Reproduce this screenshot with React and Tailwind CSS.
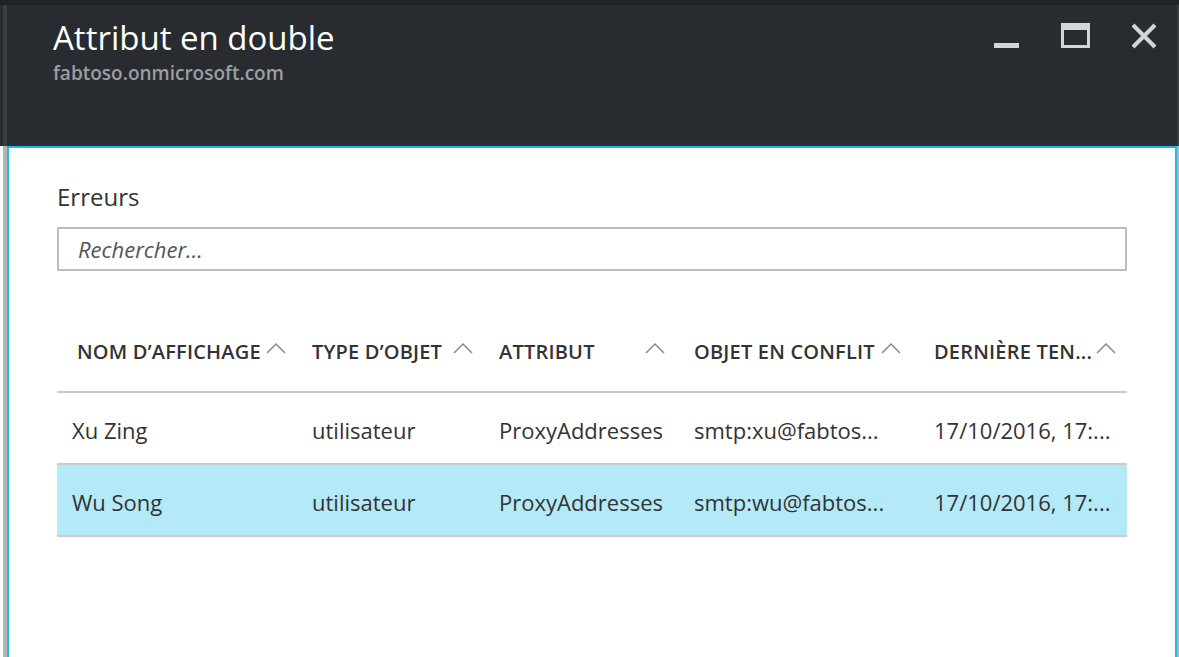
import React from 'react';

const font = { fontFamily: '"Open Sans", "Noto Sans", sans-serif' };

function Caret() {
  return (
    <svg width="20" height="12" viewBox="0 0 20 12" className="shrink-0">
      <polyline points="1,11 10,2 19,11" fill="none" stroke="#8a8a8a" strokeWidth="1.5" />
    </svg>
  );
}

const columns = [
  { label: 'NOM D\u2019AFFICHAGE', head: 'pl-[20px] pr-[11px]', caretAuto: true },
  { label: 'TYPE D\u2019OBJET', head: 'pl-[15px] pr-[11px]', caretAuto: true },
  { label: 'ATTRIBUT', head: 'pl-[15px] pr-[14px]', caretAuto: true },
  { label: 'OBJET EN CONFLIT', head: 'pl-[15px] pr-[11px]', caretAuto: false },
  { label: 'DERNIÈRE TEN...', head: 'pl-[15px] pr-[11px]', caretAuto: true },
];

const rows = [
  { name: 'Xu Zing', type: 'utilisateur', attr: 'ProxyAddresses', obj: 'smtp:xu@fabtos...', date: '17/10/2016, 17:...', selected: false },
  { name: 'Wu Song', type: 'utilisateur', attr: 'ProxyAddresses', obj: 'smtp:wu@fabtos...', date: '17/10/2016, 17:...', selected: true },
];

const grid = 'grid grid-cols-[240px_187px_195px_240px_1fr]';

export default function App() {
  return (
    <div className="w-full h-[657px] bg-white overflow-hidden flex flex-col" style={font}>
      <div className="h-[5px] bg-[#1f2226] shrink-0" />

      <div className="h-[141px] shrink-0 flex bg-[#282c31]">
        <div className="w-[3px]" />
        <div className="w-[4px] bg-[#3a3e43]" />
        <div className="flex-1 flex justify-between pl-[46px]">
          <div className="pt-[11px]">
            <h1 className="text-[33px] leading-[44px] text-white font-normal">Attribut en double</h1>
            <p className="text-[19px] leading-[24px] text-[#9b9ea2] font-semibold mt-[1px]">fabtoso.onmicrosoft.com</p>
          </div>
          <div className="flex items-start pt-[18px] pr-[20px]">
            <div className="w-[25px] h-[5px] bg-[#d4d5d6] mt-[20px]" />
            <div className="w-[29px] h-[25px] ml-[42px] border-[3px] border-t-[7px] border-[#d4d5d6]" />
            <svg width="26" height="26" viewBox="0 0 26 26" className="ml-[41px]">
              <path d="M2 2 L24 24 M24 2 L2 24" stroke="#d4d5d6" strokeWidth="4" />
            </svg>
          </div>
        </div>
        <div className="w-[2px] bg-[#3a3e43]" />
      </div>

      <div className="flex-1 flex">
        <div className="w-[3px]" />
        <div className="w-[4px] bg-[#b4b4b4]" />
        <div className="flex-1 border-2 border-b-0 border-[#1cb9ee] px-[48px] pt-[33px]">
          <h2 className="text-[24px] leading-[32px] text-[#333] mb-[14px]">Erreurs</h2>
          <div className="h-[44px] border-2 border-[#bdbdbd] flex items-center pl-[19px]">
            <span className="italic text-[22px] text-[#555]">Rechercher...</span>
          </div>

          <div className="mt-[41px]">
            <div className={`${grid} h-[81px] border-b-2 border-[#cccccc]`}>
              {columns.map((c) => (
                <div key={c.label} className={`flex items-center ${c.head}`}>
                  <span className="text-[20px] font-semibold tracking-[0.2px] text-[#333] whitespace-nowrap">{c.label}</span>
                  <span className={c.caretAuto ? 'ml-auto -mt-[8px]' : 'ml-[6px] -mt-[8px]'}>
                    <Caret />
                  </span>
                </div>
              ))}
            </div>
            {rows.map((r) => (
              <div
                key={r.name}
                className={`${grid} h-[72px] border-b-2 border-[#cccccc] text-[22px] text-[#333] ${r.selected ? 'bg-[#b4e9f8]' : ''}`}
              >
                <div className="flex items-center pt-[4px] pl-[15px] whitespace-nowrap">{r.name}</div>
                <div className="flex items-center pt-[4px] pl-[15px] whitespace-nowrap">{r.type}</div>
                <div className="flex items-center pt-[4px] pl-[15px] whitespace-nowrap">{r.attr}</div>
                <div className="flex items-center pt-[4px] pl-[15px] whitespace-nowrap">{r.obj}</div>
                <div className="flex items-center pt-[4px] pl-[15px] whitespace-nowrap">{r.date}</div>
              </div>
            ))}
          </div>
        </div>
        <div className="w-[2px] bg-[#b4b4b4]" />
      </div>
    </div>
  );
}
